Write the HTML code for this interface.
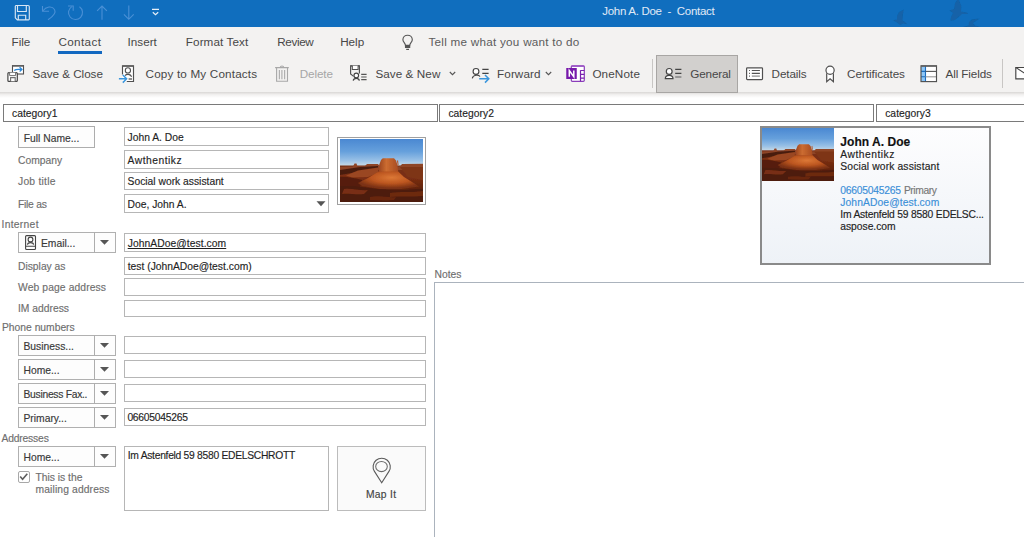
<!DOCTYPE html>
<html><head><meta charset="utf-8"><style>
html,body{margin:0;padding:0;width:1024px;height:537px;overflow:hidden;background:#fff;position:relative}
.t{position:absolute;white-space:pre;font-family:"Liberation Sans",sans-serif;}
.f{-webkit-text-stroke:0.15px currentColor}
.r{position:absolute;display:block}
</style></head><body>
<div class="r" style="left:0px;top:0px;width:1024px;height:27px;background:#106ebe"></div>
<div class="r" style="left:0px;top:27px;width:1024px;height:65px;background:#f3f2f1"></div>
<div class="r" style="left:0px;top:92px;width:1024px;height:6px;background:linear-gradient(#d9d7d5,#f2f1f0 45%,#ffffff)"></div>
<div class="t" style="left:602.30px;top:6.47px;font-size:11.50px;line-height:11.50px;color:#e0eaf6;letter-spacing:-0.295px;">John A. Doe  -  Contact</div>
<svg class="r" style="left:14px;top:4px;" width="17" height="17" viewBox="0 0 17 17"><path d="M2 1.5h12a1.3 1.3 0 0 1 1.3 1.3v12.2a0.8 0.8 0 0 1-0.8 0.8h-11.2l-2-2v-11.5a0.8 0.8 0 0 1 0.7-0.8z M3.5 1.5v6h8.8v-6 M4.3 16v-4.8h7.4v4.8" fill="none" stroke="#d8e6f4" stroke-width="1.15"/></svg>
<svg class="r" style="left:40px;top:4px;" width="18" height="18" viewBox="0 0 18 18"><path d="M2.5 2v5.3h6.5" fill="none" stroke="#4a90d6" stroke-width="1.1"/><path d="M2.8 7 C6 2.5 12 1.5 14.5 5.5 C16.5 9 13 12.5 8 15.8" fill="none" stroke="#4a90d6" stroke-width="1.1"/></svg>
<svg class="r" style="left:60px;top:0px;" width="26" height="24" viewBox="0 0 26 24"><path d="M19.5 6.8 A7 7 0 1 1 11.8 6.6" fill="none" stroke="#4a90d6" stroke-width="1.1"/><path d="M8 6h5.2v4.8" fill="none" stroke="#4a90d6" stroke-width="1.1"/></svg>
<svg class="r" style="left:95px;top:4px;" width="14" height="18" viewBox="0 0 14 18"><path d="M7 15.8V2 M2.1 6.9L7 2l4.9 4.9" fill="none" stroke="#4a90d6" stroke-width="1.1"/></svg>
<svg class="r" style="left:122px;top:4px;" width="14" height="18" viewBox="0 0 14 18"><path d="M6.8 1.4V15.3 M1.9 10.4l4.9 4.9 4.9-4.9" fill="none" stroke="#4a90d6" stroke-width="1.1"/></svg>
<svg class="r" style="left:150px;top:6px;" width="11" height="11" viewBox="0 0 11 11"><path d="M2 3.4h7 M2.8 6.3l2.7 2.4 2.7-2.4" fill="none" stroke="#e8f0f8" stroke-width="1.2"/></svg>
<svg class="r" style="left:880px;top:0px;" width="110" height="27" viewBox="0 0 110 27"><defs><filter id="bb" x="-20%" y="-20%" width="140%" height="140%"><feGaussianBlur stdDeviation="0.7"/></filter></defs><g fill="#1262a8" filter="url(#bb)"><path d="M23.8 9.4 L19 12 L17 16 L17 19.5 L12.8 20.3 L17 22.5 L20 25 L23 23.5 L27.4 24.2 L25 22 L22.5 20.5 L23 14z"/><path d="M77 0 L75 3 L74 9 L69.4 10.4 L73 13 L71 17 L70.4 21 L75 20 L80 16 L82 14 L88.2 14 L87 12.5 L81 11.5 L81.4 6 L79 0z"/><path d="M99.6 18.5 L92 19.3 L89 22 L88.5 25.5 L83 26.7 L83 28 L102 28 L102 27.2 L95 25.5 L93 23 L96 21z"/></g></svg>
<div class="t" style="left:11.50px;top:36.10px;font-size:11.70px;line-height:11.70px;color:#474747;">File</div>
<div class="t" style="left:58.40px;top:36.10px;font-size:11.70px;line-height:11.70px;color:#474747;letter-spacing:0.380px;">Contact</div>
<div class="r" style="left:58px;top:51px;width:44px;height:3px;background:#1268c0"></div>
<div class="t" style="left:127.40px;top:36.10px;font-size:11.70px;line-height:11.70px;color:#474747;letter-spacing:0.048px;">Insert</div>
<div class="t" style="left:185.80px;top:36.10px;font-size:11.70px;line-height:11.70px;color:#474747;letter-spacing:0.095px;">Format Text</div>
<div class="t" style="left:277.20px;top:36.10px;font-size:11.70px;line-height:11.70px;color:#474747;letter-spacing:-0.353px;">Review</div>
<div class="t" style="left:340.20px;top:36.10px;font-size:11.70px;line-height:11.70px;color:#474747;letter-spacing:-0.021px;">Help</div>
<svg class="r" style="left:396px;top:31px;" width="24" height="24" viewBox="0 0 24 24"><path d="M9.5 14.4 C9.5 12.2 6.9 11 6.9 8.7 A4.7 4.5 0 0 1 16.3 8.7 C16.3 11 13.7 12.2 13.7 14.4z" fill="none" stroke="#555" stroke-width="1.15"/><path d="M9.5 14.4V16.5H13.7V14.4 M9.5 15.5H13.7" fill="none" stroke="#555" stroke-width="1.1"/><path d="M10.2 18.4H13" stroke="#555" stroke-width="1.2"/></svg>
<div class="t" style="left:428.50px;top:36.10px;font-size:11.70px;line-height:11.70px;color:#5c5c5c;letter-spacing:0.255px;">Tell me what you want to do</div>
<div class="t" style="left:32.60px;top:67.50px;font-size:11.70px;line-height:11.70px;color:#474747;letter-spacing:-0.044px;">Save &amp; Close</div>
<div class="t" style="left:145.60px;top:67.50px;font-size:11.70px;line-height:11.70px;color:#474747;letter-spacing:0.167px;">Copy to My Contacts</div>
<div class="t" style="left:299.80px;top:67.50px;font-size:11.70px;line-height:11.70px;color:#a6a6a6;letter-spacing:-0.124px;">Delete</div>
<div class="t" style="left:375.40px;top:67.50px;font-size:11.70px;line-height:11.70px;color:#474747;letter-spacing:0.069px;">Save &amp; New</div>
<div class="t" style="left:497.10px;top:67.50px;font-size:11.70px;line-height:11.70px;color:#474747;letter-spacing:0.081px;">Forward</div>
<div class="t" style="left:592.40px;top:67.50px;font-size:11.70px;line-height:11.70px;color:#474747;letter-spacing:0.128px;">OneNote</div>
<div class="r" style="left:652px;top:59px;width:1px;height:29px;background:#c8c6c4"></div>
<div class="r" style="left:656px;top:55px;width:82px;height:38px;background:#d2d0ce;box-sizing:border-box;border:1px solid #a8a6a4"></div>
<div class="t" style="left:690.30px;top:67.50px;font-size:11.70px;line-height:11.70px;color:#474747;letter-spacing:-0.154px;">General</div>
<div class="t" style="left:771.60px;top:67.50px;font-size:11.70px;line-height:11.70px;color:#474747;letter-spacing:-0.111px;">Details</div>
<div class="t" style="left:847.00px;top:67.50px;font-size:11.70px;line-height:11.70px;color:#474747;letter-spacing:-0.047px;">Certificates</div>
<div class="t" style="left:945.50px;top:67.50px;font-size:11.70px;line-height:11.70px;color:#474747;letter-spacing:-0.107px;">All Fields</div>
<div class="r" style="left:1002px;top:59px;width:1px;height:29px;background:#c8c6c4"></div>
<svg class="r" style="left:4px;top:62px;" width="24" height="24" viewBox="0 0 24 24"><rect x="8.5" y="3.6" width="11" height="8.4" fill="#fff" stroke="#505050" stroke-width="1.1"/><path d="M8.5 3.9h11" stroke="#606060" stroke-width="1.6"/><path d="M10.2 8.6 C11.8 7.2 13.5 7.4 15 7.4 H17.6" fill="none" stroke="#2b88d8" stroke-width="1.3"/><path d="M15.6 5.3 L17.9 7.4 L15.6 9.5" fill="none" stroke="#2b88d8" stroke-width="1.3"/><rect x="3.9" y="10.6" width="9.4" height="8.8" rx="1" fill="#fff" stroke="#444" stroke-width="1.2"/><path d="M5.6 10.6v3h6v-3" fill="#fff" stroke="#707070" stroke-width="1"/><path d="M6.6 19.3v-3.7h4.6v3.7" fill="#fff" stroke="#707070" stroke-width="1.1"/></svg>
<svg class="r" style="left:114px;top:62px;" width="24" height="24" viewBox="0 0 24 24"><rect x="8.5" y="3.8" width="11" height="15.8" fill="#fff"/><path d="M8.5 12.5V3.8H19.5V19.5H12.8" fill="none" stroke="#505050" stroke-width="1.15"/><path d="M8.5 4.1H19.5" stroke="#606060" stroke-width="1.5"/><circle cx="13.9" cy="8.4" r="2.6" fill="#fff" stroke="#505050" stroke-width="1.1"/><path d="M11 13.6 C12.5 11.8 16.5 11.8 17.6 14.8" fill="none" stroke="#505050" stroke-width="1.1"/><path d="M14.6 17h3.4" stroke="#606060" stroke-width="1.4"/><path d="M4.9 16.8H12.6 M8.8 13 L12.6 16.8 L8.8 20.6" fill="none" stroke="#3a96dd" stroke-width="1.5"/></svg>
<svg class="r" style="left:270px;top:62px;" width="24" height="24" viewBox="0 0 24 24"><path d="M10.3 5.4 C10.5 3.6 13.5 3.6 13.7 5.4" fill="none" stroke="#a8a8a8" stroke-width="1.1"/><path d="M5.1 5.6H18.8 M6.6 5.6V19.3H17.5V5.6" fill="none" stroke="#a8a8a8" stroke-width="1.1"/><path d="M9.4 8V17.2 M11.9 8V17.2 M14.6 8V17.2" stroke="#b0b0b0" stroke-width="1.2"/></svg>
<svg class="r" style="left:346px;top:62px;" width="24" height="24" viewBox="0 0 24 24"><path d="M7.6 14.4 L4.6 12 V3.7 H13.4 V11.5" fill="none" stroke="#505050" stroke-width="1.15"/><path d="M4.6 3.9H13.4" stroke="#606060" stroke-width="1.5"/><path d="M6.3 3.7v3.7h5.8v-3.7" fill="#fff" stroke="#505050" stroke-width="1.05"/><circle cx="10.3" cy="13.4" r="2.3" fill="#fff" stroke="#444" stroke-width="1.1"/><path d="M7.2 18.6 C7.8 15.6 12.8 15.6 13.4 18.6" fill="none" stroke="#444" stroke-width="1.2"/><path d="M15.2 12.3h5.4 M15.2 15h5.4 M15.2 17.7h5.4" stroke="#555" stroke-width="1.2"/></svg>
<svg class="r" style="left:449px;top:71px;" width="7" height="5" viewBox="0 0 7 5"><path d="M0.8 1l2.7 2.7 2.7-2.7" fill="none" stroke="#555" stroke-width="1.1"/></svg>
<svg class="r" style="left:468px;top:62px;" width="24" height="24" viewBox="0 0 24 24"><circle cx="8" cy="9.4" r="2.9" fill="#fff" stroke="#444" stroke-width="1.15"/><path d="M4.3 16.3 C4.8 12.6 11 12.4 11.9 14.6" fill="none" stroke="#444" stroke-width="1.15"/><path d="M14.3 7.4h6.3 M14.3 11.4h6.3" stroke="#444" stroke-width="1.15"/><path d="M11.2 16.8H20.6 M17 13 L20.8 16.8 L17 20.6" fill="none" stroke="#3a96dd" stroke-width="1.5"/></svg>
<svg class="r" style="left:545px;top:71px;" width="7" height="5" viewBox="0 0 7 5"><path d="M0.8 1l2.7 2.7 2.7-2.7" fill="none" stroke="#555" stroke-width="1.1"/></svg>
<svg class="r" style="left:562px;top:62px;" width="26" height="24" viewBox="0 0 26 24"><rect x="9.3" y="3.8" width="13" height="15.5" rx="1" fill="#fff" stroke="#8a3dba" stroke-width="1.2"/><path d="M9.3 4.2h13" stroke="#9a55c6" stroke-width="1.3"/><path d="M18.5 8.3V19.3 M18.5 8.5H22.3 M18.5 12.3H22.3 M18.5 16.1H22.3" fill="none" stroke="#7a22ae" stroke-width="1.2"/><rect x="4.25" y="6" width="10.5" height="11" fill="#7719aa"/><path d="M7.3 14.7V8.6L11.8 14.7V8.6" fill="none" stroke="#fff" stroke-width="1.5"/></svg>
<svg class="r" style="left:660px;top:62px;" width="26" height="24" viewBox="0 0 26 24"><circle cx="9.2" cy="9.4" r="2.9" fill="#fff" stroke="#444" stroke-width="1.2"/><path d="M5.3 16.6 C5.3 12.2 13 12.2 13 16.6z" fill="#fff" stroke="#444" stroke-width="1.2"/><path d="M15.2 7.4h6.2 M15.2 11.4h6.2" stroke="#444" stroke-width="1.2"/><path d="M15.2 15h6.2" stroke="#777" stroke-width="1.3"/></svg>
<svg class="r" style="left:742px;top:62px;" width="24" height="24" viewBox="0 0 24 24"><rect x="4.6" y="5.8" width="15.9" height="11.8" rx="0.8" fill="#fff" stroke="#505050" stroke-width="1.2"/><path d="M7 8.5h0.9 M7 11.4h0.9 M7 14.1h0.9" stroke="#555" stroke-width="1.1"/><path d="M9.8 8.5h8.1 M9.8 11.4h8.1" stroke="#555" stroke-width="1.1"/><path d="M9.8 14.1h8.1" stroke="#888" stroke-width="1.2"/></svg>
<svg class="r" style="left:818px;top:62px;" width="24" height="24" viewBox="0 0 24 24"><path d="M8.7 11.2V19.7L12.07 16.8L15.4 19.7V11.2" fill="#fff" stroke="#505050" stroke-width="1.2"/><circle cx="12.07" cy="8.3" r="4.1" fill="#fff" stroke="#505050" stroke-width="1.2"/></svg>
<svg class="r" style="left:916px;top:62px;" width="24" height="24" viewBox="0 0 24 24"><rect x="5" y="3.8" width="15.5" height="15.8" fill="#fff"/><rect x="5" y="3.8" width="4.5" height="15.8" fill="#8ec6f5"/><path d="M5 9.4H9.5 M5 14.8H9.5 M9.5 3.8V19.6" stroke="#1a6dc0" stroke-width="1.1"/><path d="M9.5 9.4H20.5" stroke="#555" stroke-width="1.1"/><path d="M9.5 14.8H20.5" stroke="#999" stroke-width="1.1"/><rect x="5" y="3.8" width="15.5" height="15.8" fill="none" stroke="#505050" stroke-width="1.15"/><path d="M5 4.1H20.5" stroke="#606060" stroke-width="1.4"/></svg>
<svg class="r" style="left:996px;top:56px;" width="28" height="34" viewBox="0 0 28 34"><path d="M19.8 11.5h12v11.3h-12z" fill="#fff" stroke="#444" stroke-width="1.15"/><path d="M19.8 11.5l8.4 5.5 8.4-5.5" fill="none" stroke="#444" stroke-width="1.1"/></svg>
<div class="r" style="left:3px;top:104px;width:435px;height:18px;box-sizing:border-box;border:1px solid #7a7a7a;background:#fff"></div>
<div class="r" style="left:439px;top:104px;width:435px;height:18px;box-sizing:border-box;border:1px solid #7a7a7a;background:#fff"></div>
<div class="r" style="left:876px;top:104px;width:154px;height:18px;box-sizing:border-box;border:1px solid #7a7a7a;background:#fff"></div>
<div class="t f" style="left:12.00px;top:108.58px;font-size:10.30px;line-height:10.30px;color:#1f1f1f;letter-spacing:0.033px;">category1</div>
<div class="t f" style="left:448.40px;top:108.58px;font-size:10.30px;line-height:10.30px;color:#1f1f1f;letter-spacing:0.033px;">category2</div>
<div class="t f" style="left:885.20px;top:108.58px;font-size:10.30px;line-height:10.30px;color:#1f1f1f;letter-spacing:0.033px;">category3</div>
<div class="r" style="left:18px;top:126px;width:77px;height:22px;box-sizing:border-box;border:1px solid #adadad;background:#fdfdfd"></div>
<div class="t f" style="left:23.80px;top:133.98px;font-size:10.30px;line-height:10.30px;color:#383838;">Full Name...</div>
<div class="t f" style="left:18.00px;top:155.68px;font-size:10.30px;line-height:10.30px;color:#6e6e6e;">Company</div>
<div class="t f" style="left:18.00px;top:176.88px;font-size:10.30px;line-height:10.30px;color:#6e6e6e;letter-spacing:0.238px;">Job title</div>
<div class="t f" style="left:18.00px;top:199.88px;font-size:10.30px;line-height:10.30px;color:#6e6e6e;letter-spacing:-0.256px;">File as</div>
<div class="r" style="left:124px;top:127px;width:205px;height:19px;box-sizing:border-box;border:1px solid #b6b6b6;background:#fff"></div>
<div class="t f" style="left:127.60px;top:132.58px;font-size:10.30px;line-height:10.30px;color:#1f1f1f;">John A. Doe</div>
<div class="r" style="left:124px;top:150px;width:205px;height:19px;box-sizing:border-box;border:1px solid #b6b6b6;background:#fff"></div>
<div class="t f" style="left:127.60px;top:155.78px;font-size:10.30px;line-height:10.30px;color:#1f1f1f;letter-spacing:0.487px;">Awthentikz</div>
<div class="r" style="left:124px;top:172px;width:205px;height:18px;box-sizing:border-box;border:1px solid #b6b6b6;background:#fff"></div>
<div class="t f" style="left:127.60px;top:177.28px;font-size:10.30px;line-height:10.30px;color:#1f1f1f;">Social work assistant</div>
<div class="r" style="left:124px;top:194px;width:205px;height:19px;box-sizing:border-box;border:1px solid #b6b6b6;background:#fff"></div>
<div class="t f" style="left:127.60px;top:199.78px;font-size:10.30px;line-height:10.30px;color:#1f1f1f;">Doe, John A.</div>
<svg class="r" style="left:316px;top:201px;" width="10" height="7" viewBox="0 0 10 7"><path d="M0.5 0.3h9l-4.5 4.9z" fill="#555"/></svg>
<div class="r" style="left:337px;top:137px;width:89px;height:68px;box-sizing:border-box;border:1px solid #a0a0a0;background:#fff"></div>
<svg class="r" style="left:340px;top:139px;" width="83" height="63" viewBox="0 0 83 63"><defs><linearGradient id="skya" x1="0" y1="0" x2="0" y2="1"><stop offset="0" stop-color="#4a88d2"/><stop offset="0.2" stop-color="#66a0dc"/><stop offset="0.34" stop-color="#98c0e6"/><stop offset="0.42" stop-color="#c4d8e6"/></linearGradient>
<linearGradient id="gra" x1="0" y1="0" x2="0" y2="1"><stop offset="0" stop-color="#763018"/><stop offset="0.3" stop-color="#7a2e12"/><stop offset="0.6" stop-color="#5e220e"/><stop offset="1" stop-color="#361206"/></linearGradient>
<linearGradient id="bta" x1="0" y1="0" x2="1" y2="0"><stop offset="0" stop-color="#9a4420"/><stop offset="0.4" stop-color="#cc6c30"/><stop offset="1" stop-color="#a84c22"/></linearGradient>
<radialGradient id="ska" cx="0.55" cy="0.35" r="0.6"><stop offset="0" stop-color="#dc7836"/><stop offset="0.55" stop-color="#bc5620"/><stop offset="1" stop-color="#7a3012"/></radialGradient>
<filter id="bla" x="-5%" y="-5%" width="110%" height="110%"><feGaussianBlur stdDeviation="0.65"/></filter></defs>
<rect width="83" height="63" fill="url(#skya)"/>
<g filter="url(#bla)">
<rect x="-4" y="26.5" width="91" height="41" fill="url(#gra)"/>
<path d="M-4 28 L13 27.5 L14.5 24.5 L16.5 24.5 L17.5 27.5 L25 27 L27 25 L38 25 L40 27.5 L60 27.5 L62 25 L87 24.8 L87 31 L-4 31z" fill="#8e4428"/>
<path d="M0 31 L20 28 L38 27 L38 30 L20 32.5 L0 36z" fill="#4a1e10"/>
<path d="M18 31.5 L38 28.5 L38 34 L28 38 L12 38.5 L6 36.5z" fill="#9a4620"/>
<path d="M41 21 L42.8 19.2 L54 19.2 L56 21.5 L57.5 26 L58.2 33 L38.6 33 L39.3 25.5z" fill="url(#bta)"/><path d="M57 22 L58 21 L58.6 26 L57.6 26z" fill="#b4562a"/>
<path d="M-4 38 C6 37 14 39 22 41 L20 48 C12 47 4 46 -4 47z" fill="#561e0c"/><path d="M38.6 32.5 L58.2 32.5 L64 38 L72 43 L79 47.5 L62 50 L40 50 L22 47 L18 44 L28 39z" fill="url(#ska)"/>
<path d="M60 28 L87 28 L87 42 L68 38z" fill="#7e3616"/>
<path d="M-4 47 C14 45 28 50 50 51 C66 52 76 49 87 50 L87 67 L-4 67z" fill="#4e1c0c"/>
<path d="M4 50 C12 49 20 52 28 51 L24 55 C16 56 8 54 2 55z" fill="#8a3818" opacity="0.7"/><path d="M50 54 C60 52 70 54 83 52 L83 57 C70 58 60 57 50 58z" fill="#7a3014" opacity="0.7"/><path d="M30 58 C40 56 48 59 56 58 L54 61 C46 62 38 61 30 61z" fill="#7a3014" opacity="0.6"/>
</g></svg>
<div class="t f" style="left:1.50px;top:220.18px;font-size:10.30px;line-height:10.30px;color:#6e6e6e;letter-spacing:0.296px;">Internet</div>
<div class="r" style="left:18px;top:232px;width:98px;height:21px;box-sizing:border-box;border:1px solid #b0b0b0;background:#fdfdfd"></div>
<div class="r" style="left:94px;top:232px;width:1px;height:21px;background:#adadad"></div>
<svg class="r" style="left:100px;top:240.0px;" width="9" height="5" viewBox="0 0 9 5"><path d="M0 0h9l-4.5 4.8z" fill="#555"/></svg>
<svg class="r" style="left:20px;top:230px;" width="24" height="24" viewBox="0 0 24 24"><rect x="5.6" y="5.6" width="9.9" height="13.9" rx="1" fill="none" stroke="#444" stroke-width="1.1"/><circle cx="10.5" cy="9.5" r="2.4" fill="none" stroke="#444" stroke-width="1.1"/><path d="M7.4 14.6 C7.9 11.9 13.2 11.9 13.7 14.6 M5.6 16.3H15.5" fill="none" stroke="#444" stroke-width="1.1"/></svg>
<div class="t f" style="left:41.00px;top:239.38px;font-size:10.30px;line-height:10.30px;color:#383838;">Email...</div>
<div class="r" style="left:124px;top:233px;width:302px;height:19px;box-sizing:border-box;border:1px solid #b6b6b6;background:#fff"></div>
<div class="t f" style="left:127.70px;top:239.18px;font-size:10.30px;line-height:10.30px;color:#1f1f1f;letter-spacing:0.064px;text-decoration:underline;">JohnADoe@test.com</div>
<div class="t f" style="left:18.00px;top:262.28px;font-size:10.30px;line-height:10.30px;color:#6e6e6e;">Display as</div>
<div class="r" style="left:124px;top:257px;width:302px;height:18px;box-sizing:border-box;border:1px solid #b6b6b6;background:#fff"></div>
<div class="t f" style="left:127.70px;top:262.08px;font-size:10.30px;line-height:10.30px;color:#1f1f1f;letter-spacing:0.009px;">test (JohnADoe@test.com)</div>
<div class="t f" style="left:18.00px;top:283.18px;font-size:10.30px;line-height:10.30px;color:#6e6e6e;letter-spacing:0.115px;">Web page address</div>
<div class="r" style="left:124px;top:278px;width:302px;height:18px;box-sizing:border-box;border:1px solid #b6b6b6;background:#fff"></div>
<div class="t f" style="left:18.00px;top:304.08px;font-size:10.30px;line-height:10.30px;color:#6e6e6e;">IM address</div>
<div class="r" style="left:124px;top:300px;width:302px;height:17px;box-sizing:border-box;border:1px solid #b6b6b6;background:#fff"></div>
<div class="t f" style="left:2.00px;top:322.68px;font-size:10.30px;line-height:10.30px;color:#6e6e6e;">Phone numbers</div>
<div class="r" style="left:18px;top:335px;width:98px;height:21px;box-sizing:border-box;border:1px solid #b0b0b0;background:#fdfdfd"></div>
<div class="r" style="left:94px;top:335px;width:1px;height:21px;background:#adadad"></div>
<svg class="r" style="left:100px;top:343.0px;" width="9" height="5" viewBox="0 0 9 5"><path d="M0 0h9l-4.5 4.8z" fill="#555"/></svg>
<div class="t f" style="left:23.50px;top:342.38px;font-size:10.30px;line-height:10.30px;color:#383838;">Business...</div>
<div class="r" style="left:18px;top:359px;width:98px;height:21px;box-sizing:border-box;border:1px solid #b0b0b0;background:#fdfdfd"></div>
<div class="r" style="left:94px;top:359px;width:1px;height:21px;background:#adadad"></div>
<svg class="r" style="left:100px;top:367.0px;" width="9" height="5" viewBox="0 0 9 5"><path d="M0 0h9l-4.5 4.8z" fill="#555"/></svg>
<div class="t f" style="left:23.50px;top:366.38px;font-size:10.30px;line-height:10.30px;color:#383838;">Home...</div>
<div class="r" style="left:18px;top:383px;width:98px;height:21px;box-sizing:border-box;border:1px solid #b0b0b0;background:#fdfdfd"></div>
<div class="r" style="left:94px;top:383px;width:1px;height:21px;background:#adadad"></div>
<svg class="r" style="left:100px;top:391.0px;" width="9" height="5" viewBox="0 0 9 5"><path d="M0 0h9l-4.5 4.8z" fill="#555"/></svg>
<div class="t f" style="left:23.50px;top:390.38px;font-size:10.30px;line-height:10.30px;color:#383838;letter-spacing:-0.273px;">Business Fax..</div>
<div class="r" style="left:18px;top:407px;width:98px;height:21px;box-sizing:border-box;border:1px solid #b0b0b0;background:#fdfdfd"></div>
<div class="r" style="left:94px;top:407px;width:1px;height:21px;background:#adadad"></div>
<svg class="r" style="left:100px;top:415.0px;" width="9" height="5" viewBox="0 0 9 5"><path d="M0 0h9l-4.5 4.8z" fill="#555"/></svg>
<div class="t f" style="left:23.50px;top:414.38px;font-size:10.30px;line-height:10.30px;color:#383838;">Primary...</div>
<div class="r" style="left:124px;top:336px;width:302px;height:18px;box-sizing:border-box;border:1px solid #b6b6b6;background:#fff"></div>
<div class="r" style="left:124px;top:360px;width:302px;height:18px;box-sizing:border-box;border:1px solid #b6b6b6;background:#fff"></div>
<div class="r" style="left:124px;top:384px;width:302px;height:18px;box-sizing:border-box;border:1px solid #b6b6b6;background:#fff"></div>
<div class="r" style="left:124px;top:408px;width:302px;height:18px;box-sizing:border-box;border:1px solid #b6b6b6;background:#fff"></div>
<div class="t f" style="left:127.40px;top:413.08px;font-size:10.30px;line-height:10.30px;color:#1f1f1f;letter-spacing:-0.251px;">06605045265</div>
<div class="t f" style="left:1.50px;top:433.78px;font-size:10.30px;line-height:10.30px;color:#6e6e6e;letter-spacing:-0.171px;">Addresses</div>
<div class="r" style="left:18px;top:446px;width:98px;height:21px;box-sizing:border-box;border:1px solid #b0b0b0;background:#fdfdfd"></div>
<div class="r" style="left:94px;top:446px;width:1px;height:21px;background:#adadad"></div>
<svg class="r" style="left:100px;top:454.0px;" width="9" height="5" viewBox="0 0 9 5"><path d="M0 0h9l-4.5 4.8z" fill="#555"/></svg>
<div class="t f" style="left:23.50px;top:453.38px;font-size:10.30px;line-height:10.30px;color:#383838;">Home...</div>
<div class="r" style="left:17.5px;top:470.5px;width:12.3px;height:12.3px;box-sizing:border-box;border:1.3px solid #a8a8a8;border-radius:2px;background:#fff"></div>
<svg class="r" style="left:14px;top:466px;" width="24" height="24" viewBox="0 0 24 24"><path d="M6.2 10.4 L8.6 13.3 L13.3 7.7" fill="none" stroke="#5e5e5e" stroke-width="1.6"/></svg>
<div class="t f" style="left:35.50px;top:472.78px;font-size:10.30px;line-height:10.30px;color:#6e6e6e;">This is the</div>
<div class="t f" style="left:35.50px;top:485.28px;font-size:10.30px;line-height:10.30px;color:#6e6e6e;letter-spacing:0.133px;">mailing address</div>
<div class="r" style="left:124px;top:446px;width:205px;height:65px;box-sizing:border-box;border:1px solid #b6b6b6;background:#fff"></div>
<div class="t f" style="left:127.80px;top:451.08px;font-size:10.30px;line-height:10.30px;color:#1f1f1f;letter-spacing:-0.285px;">Im Astenfeld 59 8580 EDELSCHROTT</div>
<div class="r" style="left:337px;top:446px;width:89px;height:65px;box-sizing:border-box;border:1px solid #bcbcbc;background:#fafafa"></div>
<svg class="r" style="left:371px;top:456px;" width="22" height="29" viewBox="0 0 22 29"><path d="M10.7 26.8 L3.45 15.42 A8.6 8.6 0 1 1 17.95 15.42 Z" fill="none" stroke="#5a5a5a" stroke-width="1.1"/><ellipse cx="10.5" cy="10.5" rx="5.8" ry="5.1" fill="none" stroke="#6a6a6a" stroke-width="1.05"/></svg>
<div class="t f" style="left:366.00px;top:490.48px;font-size:10.30px;line-height:10.30px;color:#444;letter-spacing:0.276px;">Map It</div>
<div class="r" style="left:760px;top:126px;width:231px;height:139px;box-sizing:border-box;border:2px solid #8a8a8a;background:linear-gradient(#fdfdfe,#eef2f7)"></div>
<svg class="r" style="left:762px;top:128px;" width="72" height="53" viewBox="0 0 72 53"><g transform="scale(0.8675,0.8413)"><defs><linearGradient id="skyb" x1="0" y1="0" x2="0" y2="1"><stop offset="0" stop-color="#4a88d2"/><stop offset="0.2" stop-color="#66a0dc"/><stop offset="0.34" stop-color="#98c0e6"/><stop offset="0.42" stop-color="#c4d8e6"/></linearGradient>
<linearGradient id="grb" x1="0" y1="0" x2="0" y2="1"><stop offset="0" stop-color="#763018"/><stop offset="0.3" stop-color="#7a2e12"/><stop offset="0.6" stop-color="#5e220e"/><stop offset="1" stop-color="#361206"/></linearGradient>
<linearGradient id="btb" x1="0" y1="0" x2="1" y2="0"><stop offset="0" stop-color="#9a4420"/><stop offset="0.4" stop-color="#cc6c30"/><stop offset="1" stop-color="#a84c22"/></linearGradient>
<radialGradient id="skb" cx="0.55" cy="0.35" r="0.6"><stop offset="0" stop-color="#dc7836"/><stop offset="0.55" stop-color="#bc5620"/><stop offset="1" stop-color="#7a3012"/></radialGradient>
<filter id="blb" x="-5%" y="-5%" width="110%" height="110%"><feGaussianBlur stdDeviation="0.65"/></filter></defs>
<rect width="83" height="63" fill="url(#skyb)"/>
<g filter="url(#blb)">
<rect x="-4" y="26.5" width="91" height="41" fill="url(#grb)"/>
<path d="M-4 28 L13 27.5 L14.5 24.5 L16.5 24.5 L17.5 27.5 L25 27 L27 25 L38 25 L40 27.5 L60 27.5 L62 25 L87 24.8 L87 31 L-4 31z" fill="#8e4428"/>
<path d="M0 31 L20 28 L38 27 L38 30 L20 32.5 L0 36z" fill="#4a1e10"/>
<path d="M18 31.5 L38 28.5 L38 34 L28 38 L12 38.5 L6 36.5z" fill="#9a4620"/>
<path d="M41 21 L42.8 19.2 L54 19.2 L56 21.5 L57.5 26 L58.2 33 L38.6 33 L39.3 25.5z" fill="url(#btb)"/><path d="M57 22 L58 21 L58.6 26 L57.6 26z" fill="#b4562a"/>
<path d="M-4 38 C6 37 14 39 22 41 L20 48 C12 47 4 46 -4 47z" fill="#561e0c"/><path d="M38.6 32.5 L58.2 32.5 L64 38 L72 43 L79 47.5 L62 50 L40 50 L22 47 L18 44 L28 39z" fill="url(#skb)"/>
<path d="M60 28 L87 28 L87 42 L68 38z" fill="#7e3616"/>
<path d="M-4 47 C14 45 28 50 50 51 C66 52 76 49 87 50 L87 67 L-4 67z" fill="#4e1c0c"/>
<path d="M4 50 C12 49 20 52 28 51 L24 55 C16 56 8 54 2 55z" fill="#8a3818" opacity="0.7"/><path d="M50 54 C60 52 70 54 83 52 L83 57 C70 58 60 57 50 58z" fill="#7a3014" opacity="0.7"/><path d="M30 58 C40 56 48 59 56 58 L54 61 C46 62 38 61 30 61z" fill="#7a3014" opacity="0.6"/>
</g></g></svg>
<div class="t f" style="left:840.30px;top:135.54px;font-size:12.00px;line-height:12.00px;color:#111;letter-spacing:0.044px;font-weight:bold;">John A. Doe</div>
<div class="t f" style="left:840.30px;top:150.48px;font-size:10.30px;line-height:10.30px;color:#222;letter-spacing:0.487px;">Awthentikz</div>
<div class="t f" style="left:840.30px;top:162.28px;font-size:10.30px;line-height:10.30px;color:#222;letter-spacing:0.141px;">Social work assistant</div>
<div class="t f" style="left:840.30px;top:186.28px;font-size:10.30px;line-height:10.30px;color:#3b8fd8;letter-spacing:-0.231px;">06605045265</div>
<div class="t f" style="left:903.90px;top:186.28px;font-size:10.30px;line-height:10.30px;color:#777;letter-spacing:-0.413px;">Primary</div>
<div class="t f" style="left:840.30px;top:198.28px;font-size:10.30px;line-height:10.30px;color:#3b8fd8;letter-spacing:0.095px;">JohnADoe@test.com</div>
<div class="t f" style="left:840.30px;top:209.78px;font-size:10.30px;line-height:10.30px;color:#222;letter-spacing:-0.198px;">Im Astenfeld 59 8580 EDELSC...</div>
<div class="t f" style="left:840.30px;top:221.58px;font-size:10.30px;line-height:10.30px;color:#222;letter-spacing:-0.026px;">aspose.com</div>
<div class="t f" style="left:434.50px;top:270.18px;font-size:10.30px;line-height:10.30px;color:#6e6e6e;letter-spacing:0.023px;">Notes</div>
<div class="r" style="left:434px;top:282px;width:600px;height:260px;box-sizing:border-box;border:1px solid #abb3bd;background:#fff"></div>
</body></html>
